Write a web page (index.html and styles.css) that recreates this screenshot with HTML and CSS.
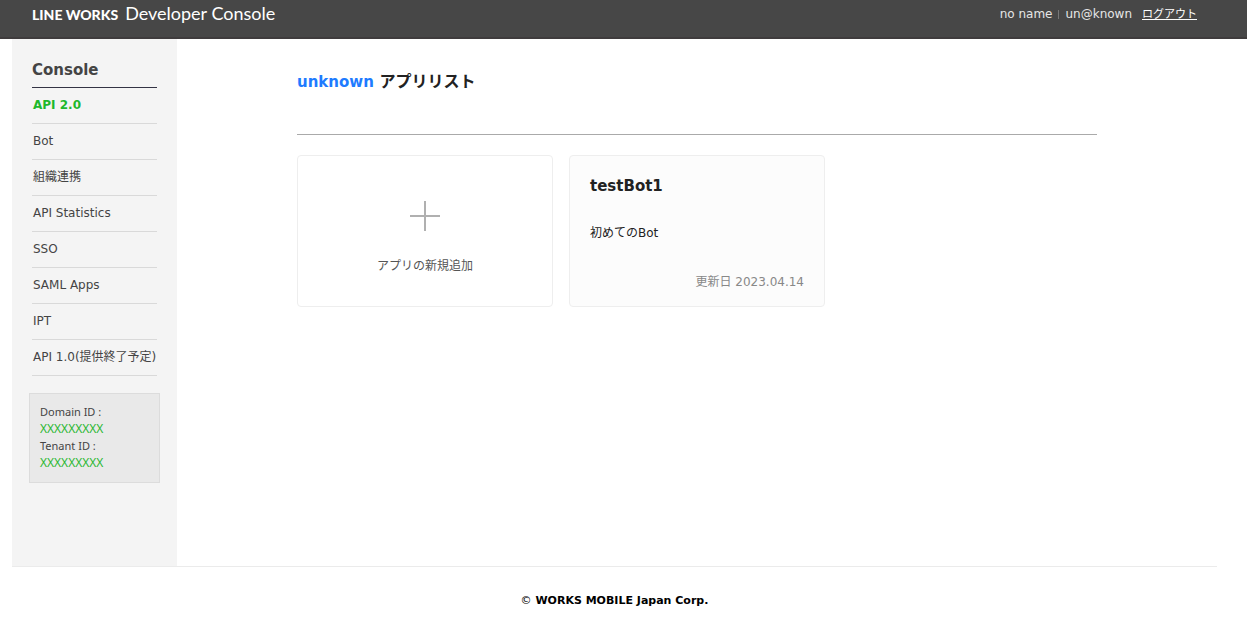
FILE: index.html
```html
<!DOCTYPE html>
<html lang="ja">
<head>
<meta charset="utf-8">
<title>LINE WORKS Developer Console</title>
<link rel="stylesheet" href="styles.css">
</head>
<body>
<header class="topbar">
  <h1 class="logo"><strong class="logo-brand">LINE WORKS</strong><span class="logo-product">Developer Console</span></h1>
  <div class="account">
    <span>no name</span>
    <span class="divider"></span>
    <span>un@known</span>
    <a class="logout" href="#">ログアウト</a>
  </div>
</header>
<div class="page">
  <div class="columns">
    <aside class="sidebar">
      <h2 class="sidebar-title">Console</h2>
      <nav>
        <ul class="menu">
          <li><a class="active" href="#">API 2.0</a></li>
          <li><a href="#">Bot</a></li>
          <li><a href="#">組織連携</a></li>
          <li><a href="#">API Statistics</a></li>
          <li><a href="#">SSO</a></li>
          <li><a href="#">SAML Apps</a></li>
          <li><a href="#">IPT</a></li>
          <li><a href="#">API 1.0(提供終了予定)</a></li>
        </ul>
      </nav>
      <dl class="ids">
        <dt>Domain ID :</dt>
        <dd>XXXXXXXXX</dd>
        <dt>Tenant ID :</dt>
        <dd>XXXXXXXXX</dd>
      </dl>
    </aside>
    <main class="main">
      <div class="content">
        <h2 class="title"><span class="owner">unknown</span> アプリリスト</h2>
        <div class="cards">
          <button class="card card-add" type="button">
            <svg class="plus" width="30" height="30" viewBox="0 0 30 30" aria-hidden="true"><path d="M15 0v30M0 15h30" stroke="#b0b0b0" stroke-width="2"/></svg>
            <span>アプリの新規追加</span>
          </button>
          <article class="card card-app">
            <h3 class="app-name">testBot1</h3>
            <p class="app-desc">初めてのBot</p>
            <p class="app-date">更新日 2023.04.14</p>
          </article>
        </div>
      </div>
    </main>
  </div>
  <footer class="footer"><span class="copy">©</span> WORKS MOBILE Japan Corp.</footer>
</div>
</body>
</html>
```
FILE: styles.css
```css
* { box-sizing: border-box; }

body, h1, h2, h3, p, ul, dl, dd { margin: 0; padding: 0; }

body {
  background: #fff;
  color: #222;
  font-family: "DejaVu Sans", "Noto Sans CJK JP", sans-serif;
  font-size: 12px;
  line-height: 17px;
}

.topbar {
  display: flex;
  justify-content: space-between;
  align-items: flex-start;
  height: 39px;
  padding: 4px 50px 0 32px;
  border-bottom: 2px solid #3f3c3d;
  background: #474747;
  color: #fff;
}

.logo {
  display: flex;
  align-items: baseline;
  gap: 7px;
  font-family: Lato, sans-serif;
  font-size: 18px;
  font-weight: 400;
  line-height: 18px;
}

.logo-brand { font-size: 14px; font-weight: 900; }

.account {
  display: flex;
  align-items: center;
  height: 20px;
  color: #e6e6e6;
}

.divider { width: 1px; height: 9px; margin: 0 6px; background: #777; }
.logout { margin-left: 10px; color: #fff; font-size: 11px; }

.page { margin: 0 30px 0 12px; }
.columns { display: flex; min-height: 527px; }

.sidebar {
  flex: 0 0 165px;
  padding: 20px 20px 0;
  background: #f4f4f4;
  color: #444;
}

.sidebar-title {
  padding-bottom: 6px;
  border-bottom: 1px solid #333344;
  font-size: 15px;
  line-height: 22px;
}

.menu { list-style: none; }
.menu li { border-bottom: 1px solid #d9d9d9; }

.menu a {
  display: block;
  padding-left: 1px;
  color: #444;
  line-height: 35px;
  text-decoration: none;
  white-space: nowrap;
}

.menu .active { color: #1db82c; font-weight: 700; }

.ids {
  margin: 17px -3px 0;
  padding: 9px 10px 11px;
  border: 1px solid #dcdcdc;
  background: #e9e9e9;
  font-family: "Noto Sans", sans-serif;
}

.ids dt { font-size: 11px; }
.ids dd { color: #2db833; }

.main { flex: 1; padding: 31px 20px 0; }
.content { max-width: 800px; margin: 0 auto; }

.title {
  padding-bottom: 40px;
  border-bottom: 1px solid #aaa;
  font-size: 16px;
  line-height: 24px;
}

.owner { color: #1e7bff; font-size: 15px; }

.cards {
  display: grid;
  grid-template-columns: repeat(auto-fill, 256px);
  gap: 16px;
  margin-top: 20px;
}

.card {
  min-height: 152px;
  border: 1px solid #eee;
  border-radius: 4px;
  font-family: inherit;
  font-size: 12px;
}

.card-add {
  display: flex;
  flex-direction: column;
  align-items: center;
  gap: 27px;
  padding: 45px 20px 0;
  background: #fff;
  color: #555;
  line-height: 17px;
}

.plus { display: block; }

.card-app { padding: 18px 20px 0; background: #fcfcfc; }
.app-name { font-size: 15px; line-height: 24px; }
.app-desc { margin-top: 27px; }
.app-date { margin-top: 32px; color: #888; text-align: right; }

.footer {
  padding: 25px 0 9px;
  border-top: 1px solid #ebebeb;
  color: #000;
  font-size: 11px;
  font-weight: 700;
  text-align: center;
}

.copy { font-weight: 400; }
```
